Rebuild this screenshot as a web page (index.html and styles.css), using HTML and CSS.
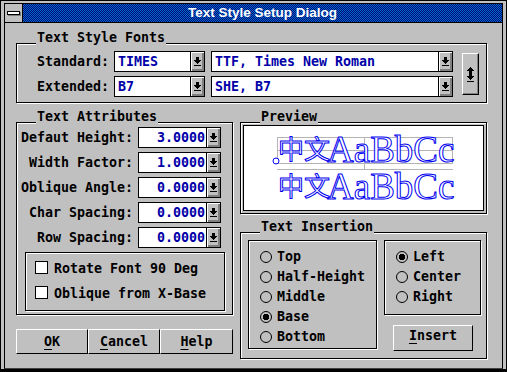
FILE: index.html
```html
<!DOCTYPE html>
<html>
<head>
<meta charset="utf-8">
<title>Text Style Setup Dialog</title>
<link rel="stylesheet" href="styles.css">
</head>
<body>
<div class="win">
  <div class="inner">
    <div class="titlebar">
      <div class="sysmenu"><span class="sysbar"></span></div>
      <div class="title">Text Style Setup Dialog</div>
    </div>
    <div class="client">
      <div class="group fonts">
        <div class="glabel">Text Style Fonts</div>
        <div class="frows">
          <div class="frow">
            <span class="flabel">Standard:</span>
            <div class="field f1">TIMES</div>
            <div class="drop"><svg width="7" height="9" viewBox="0 0 7 9"><path d="M2 0h3v3h2v1h-1v1h-1v1h-1v1h-1v-1h-1v-1h-1v-1h-1v-1h2z"/><rect y="8" width="7" height="1"/></svg></div>
            <div class="field f2">TTF, Times New Roman</div>
            <div class="drop"><svg width="7" height="9" viewBox="0 0 7 9"><path d="M2 0h3v3h2v1h-1v1h-1v1h-1v1h-1v-1h-1v-1h-1v-1h-1v-1h2z"/><rect y="8" width="7" height="1"/></svg></div>
          </div>
          <div class="frow">
            <span class="flabel">Extended:</span>
            <div class="field f1">B7</div>
            <div class="drop"><svg width="7" height="9" viewBox="0 0 7 9"><path d="M2 0h3v3h2v1h-1v1h-1v1h-1v1h-1v-1h-1v-1h-1v-1h-1v-1h2z"/><rect y="8" width="7" height="1"/></svg></div>
            <div class="field f2">SHE, B7</div>
            <div class="drop"><svg width="7" height="9" viewBox="0 0 7 9"><path d="M2 0h3v3h2v1h-1v1h-1v1h-1v1h-1v-1h-1v-1h-1v-1h-1v-1h2z"/><rect y="8" width="7" height="1"/></svg></div>
          </div>
        </div>
        <div class="spin"><svg width="7" height="15" viewBox="0 0 7 15"><path d="M3 0h1v1h1v1h1v1h1v1h-2v5h2v1h-1v1h-1v1h-1v1h-1v-1h-1v-1h-1v-1h-1v-1h2v-5h-2v-1h1v-1h1v-1h1z"/><rect y="14" width="7" height="1"/></svg></div>
      </div>

      <div class="lower">
        <div class="lcol">
          <div class="group attrs">
            <div class="glabel">Text Attributes</div>
            <div class="arow"><span class="alabel">Defaut Height:</span><div class="field num">3.0000</div><div class="drop"><svg width="7" height="9" viewBox="0 0 7 9"><path d="M2 0h3v3h2v1h-1v1h-1v1h-1v1h-1v-1h-1v-1h-1v-1h-1v-1h2z"/><rect y="8" width="7" height="1"/></svg></div></div>
            <div class="arow"><span class="alabel">Width Factor:</span><div class="field num">1.0000</div><div class="drop"><svg width="7" height="9" viewBox="0 0 7 9"><path d="M2 0h3v3h2v1h-1v1h-1v1h-1v1h-1v-1h-1v-1h-1v-1h-1v-1h2z"/><rect y="8" width="7" height="1"/></svg></div></div>
            <div class="arow"><span class="alabel">Oblique Angle:</span><div class="field num">0.0000</div><div class="drop"><svg width="7" height="9" viewBox="0 0 7 9"><path d="M2 0h3v3h2v1h-1v1h-1v1h-1v1h-1v-1h-1v-1h-1v-1h-1v-1h2z"/><rect y="8" width="7" height="1"/></svg></div></div>
            <div class="arow"><span class="alabel">Char Spacing:</span><div class="field num">0.0000</div><div class="drop"><svg width="7" height="9" viewBox="0 0 7 9"><path d="M2 0h3v3h2v1h-1v1h-1v1h-1v1h-1v-1h-1v-1h-1v-1h-1v-1h2z"/><rect y="8" width="7" height="1"/></svg></div></div>
            <div class="arow"><span class="alabel">Row Spacing:</span><div class="field num">0.0000</div><div class="drop"><svg width="7" height="9" viewBox="0 0 7 9"><path d="M2 0h3v3h2v1h-1v1h-1v1h-1v1h-1v-1h-1v-1h-1v-1h-1v-1h2z"/><rect y="8" width="7" height="1"/></svg></div></div>
            <div class="chkbox">
              <div class="chkrow"><span class="check"></span><span class="chklabel">Rotate Font 90 Deg</span></div>
              <div class="chkrow"><span class="check"></span><span class="chklabel">Oblique from X-Base</span></div>
            </div>
          </div>
          <div class="btns">
            <div class="btn b1"><u>O</u>K</div>
            <div class="btn b2"><u>C</u>ancel</div>
            <div class="btn b3"><u>H</u>elp</div>
          </div>
        </div>

        <div class="rcol">
          <div class="group preview">
            <div class="glabel">Preview</div>
            <div class="panel">
              <svg class="pv" width="239" height="84" viewBox="0 0 239 84">
                <path class="guide" d="M33 11.5H209M33 24.5H209M33 37.5H209M33 43.5H209M33.5 11V38M208.5 11V38M120.5 11V44"/>
                <text class="cjk" x="34" y="33">中文</text>
                <text class="lat" x="83" y="36">AaBbCc</text>
                <text class="cjk" x="34" y="70">中文</text>
                <text class="lat" x="83" y="73">AaBbCc</text>
                <circle class="ins" cx="32" cy="35" r="3"/>
              </svg>
            </div>
          </div>
          <div class="group insertion">
            <div class="glabel">Text Insertion</div>
            <div class="ibody">
              <div class="rbox vbox">
                <div class="radio"><span class="dot"></span><span>Top</span></div>
                <div class="radio"><span class="dot"></span><span>Half-Height</span></div>
                <div class="radio"><span class="dot"></span><span>Middle</span></div>
                <div class="radio"><span class="dot on"></span><span>Base</span></div>
                <div class="radio"><span class="dot"></span><span>Bottom</span></div>
              </div>
              <div class="icol">
                <div class="rbox hbox">
                  <div class="radio"><span class="dot on"></span><span>Left</span></div>
                  <div class="radio"><span class="dot"></span><span>Center</span></div>
                  <div class="radio"><span class="dot"></span><span>Right</span></div>
                </div>
                <div class="btn insbtn"><u>I</u>nsert</div>
              </div>
            </div>
          </div>
        </div>
      </div>
    </div>
  </div>
</div>
</body>
</html>
```
FILE: styles.css
```css
* { box-sizing: border-box; }
html, body { margin: 0; padding: 0; background: #c0c0c0; }
body {
  font-family: "DejaVu Sans Mono", monospace;
  font-weight: bold;
  font-size: 13.3px;
  color: #000;
}
.win {
  width: 507px;
  height: 372px;
  border: 1px solid #000;
  border-bottom-width: 3px;
  padding: 2px 3px 0 3px;
  background: #c0c0c0;
}
.inner {
  height: 100%;
  border: 1px solid #000;
  border-bottom-color: #404040;
  display: flex;
  flex-direction: column;
}
.titlebar {
  flex: none;
  height: 19px;
  display: flex;
  border-bottom: 1px solid #000;
}
.sysmenu {
  width: 18px;
  border-right: 1px solid #000;
  background: #c0c0c0;
  display: flex;
  align-items: center;
  justify-content: center;
}
.sysbar {
  width: 13px;
  height: 4px;
  background: #fff;
  border: 1px solid #000;
  box-shadow: 1px 1px 0 #808080;
}
.title {
  flex: 1;
  background-color: #000080;
  background-image: conic-gradient(#0070c0 25%, transparent 0 50%, #0070c0 0 75%, transparent 0);
  background-size: 2px 2px;
  color: #fff;
  font-family: "Liberation Sans", Arial, sans-serif;
  font-size: 13.5px;
  font-weight: bold;
  text-align: center;
  line-height: 17px;
}
.client {
  flex: 1;
  padding: 20px 0 0 11px;
}

/* group boxes (etched) */
.group {
  position: relative;
  border: 1px solid #000;
  box-shadow: inset 1px 1px 0 #fff, 1px 1px 0 #fff;
}
.glabel {
  position: absolute;
  left: 19px;
  top: -13px;
  height: 15px;
  line-height: 13px;
  padding: 0 1px;
  background: #c0c0c0;
  white-space: nowrap;
}

/* fonts group */
.fonts {
  width: 471px;
  height: 60px;
  display: flex;
  align-items: flex-start;
  padding: 7px 0 0 20px;
}
.frows { display: flex; flex-direction: column; gap: 4px; }
.frow { display: flex; height: 21px; }
.flabel { width: 77px; line-height: 21px; }
.field {
  height: 21px;
  border: 1px solid #000;
  background: #fff;
  color: #0000a8;
  padding-left: 3px;
  line-height: 19px;
  white-space: nowrap;
}
.f1 { width: 77px; }
.f2 { width: 228px; margin-left: 6px; }
.drop {
  width: 14px;
  height: 21px;
  border: 1px solid #000;
  border-left: none;
  background: #c0c0c0;
  box-shadow: inset 1px 1px 0 #fff, inset -2px -2px 0 #808080;
  display: flex;
  align-items: center;
  justify-content: center;
  padding: 0 1px 1px 0;
}
.drop svg, .spin svg { display: block; fill: #000; }
.spin {
  width: 17px;
  height: 42px;
  margin: 2px 0 0 9px;
  border: 1px solid;
  border-color: #fff #000 #000 #fff;
  box-shadow: inset -1px -1px 0 #808080;
  display: flex;
  align-items: center;
  justify-content: center;
}

/* lower area */
.lower { display: flex; gap: 7px; margin-top: 19px; }
.lcol { width: 217px; }
.rcol { width: 247px; }

.attrs {
  height: 193px;
  padding-top: 4px;
  display: flex;
  flex-direction: column;
  gap: 4px;
}
.arow { display: flex; height: 21px; }
.alabel {
  width: 116px;
  margin-right: 5px;
  text-align: right;
  line-height: 21px;
  white-space: nowrap;
}
.num { width: 69px; text-align: right; padding: 0 1px 0 0; }

.chkbox {
  width: 200px;
  height: 59px;
  margin-left: 8px;
  border: 1px solid #000;
  box-shadow: inset 1px 1px 0 #fff, 1px 1px 0 #fff;
  padding: 8px 0 0 9px;
  display: flex;
  flex-direction: column;
  gap: 12px;
}
.chkrow { display: flex; align-items: flex-start; height: 13px; }
.check {
  width: 13px;
  height: 13px;
  background: #fff;
  border: 1px solid #000;
  margin-right: 6px;
  flex: none;
}
.chklabel { line-height: 15px; white-space: nowrap; }

.btns { display: flex; margin-top: 14px; }
.btn {
  height: 25px;
  border: 1px solid;
  border-color: #fff #000 #000 #fff;
  background: #c0c0c0;
  text-align: center;
  line-height: 23px;
}
.btn u { text-decoration-thickness: 1px; text-underline-offset: 3px; }
.b1, .b2 { width: 72px; }
.b3 { width: 73px; }

/* preview */
.preview { height: 92px; padding: 2px; }
.panel {
  height: 86px;
  border: 1px solid #000;
  background: #fff;
}
.pv { display: block; }
.guide { stroke: #b4b4b4; stroke-width: 1; fill: none; }
.cjk {
  font-family: "Noto Sans CJK SC", sans-serif;
  font-size: 26px;
  font-weight: normal;
  fill: #fff;
  stroke: #0000f0;
  stroke-width: 1;
}
.lat {
  font-family: "Liberation Serif", serif;
  font-size: 37px;
  font-weight: normal;
  fill: #fff;
  stroke: #0000f0;
  stroke-width: 1;
}
.ins { fill: #fff; stroke: #0000f0; stroke-width: 1; }

/* text insertion */
.insertion { height: 127px; margin-top: 18px; padding: 7px 0 0 7px; }
.ibody { display: flex; gap: 7px; align-items: flex-start; }
.rbox {
  border: 1px solid #000;
  box-shadow: inset 1px 1px 0 #fff, 1px 1px 0 #fff;
  padding: 6px 0 0 11px;
}
.vbox { width: 129px; height: 109px; }
.hbox { width: 97px; height: 75px; }
.radio { display: flex; align-items: center; height: 20px; line-height: 20px; white-space: nowrap; }
.dot {
  width: 12px;
  height: 12px;
  border: 1px solid #000;
  border-radius: 50%;
  margin-right: 5px;
  flex: none;
}
.dot.on { background: radial-gradient(circle, #000 0 3px, transparent 3.5px); }
.icol { display: flex; flex-direction: column; align-items: flex-start; }
.insbtn {
  width: 80px;
  height: 26px;
  margin: 10px 0 0 9px;
  line-height: 20px;
}
```
